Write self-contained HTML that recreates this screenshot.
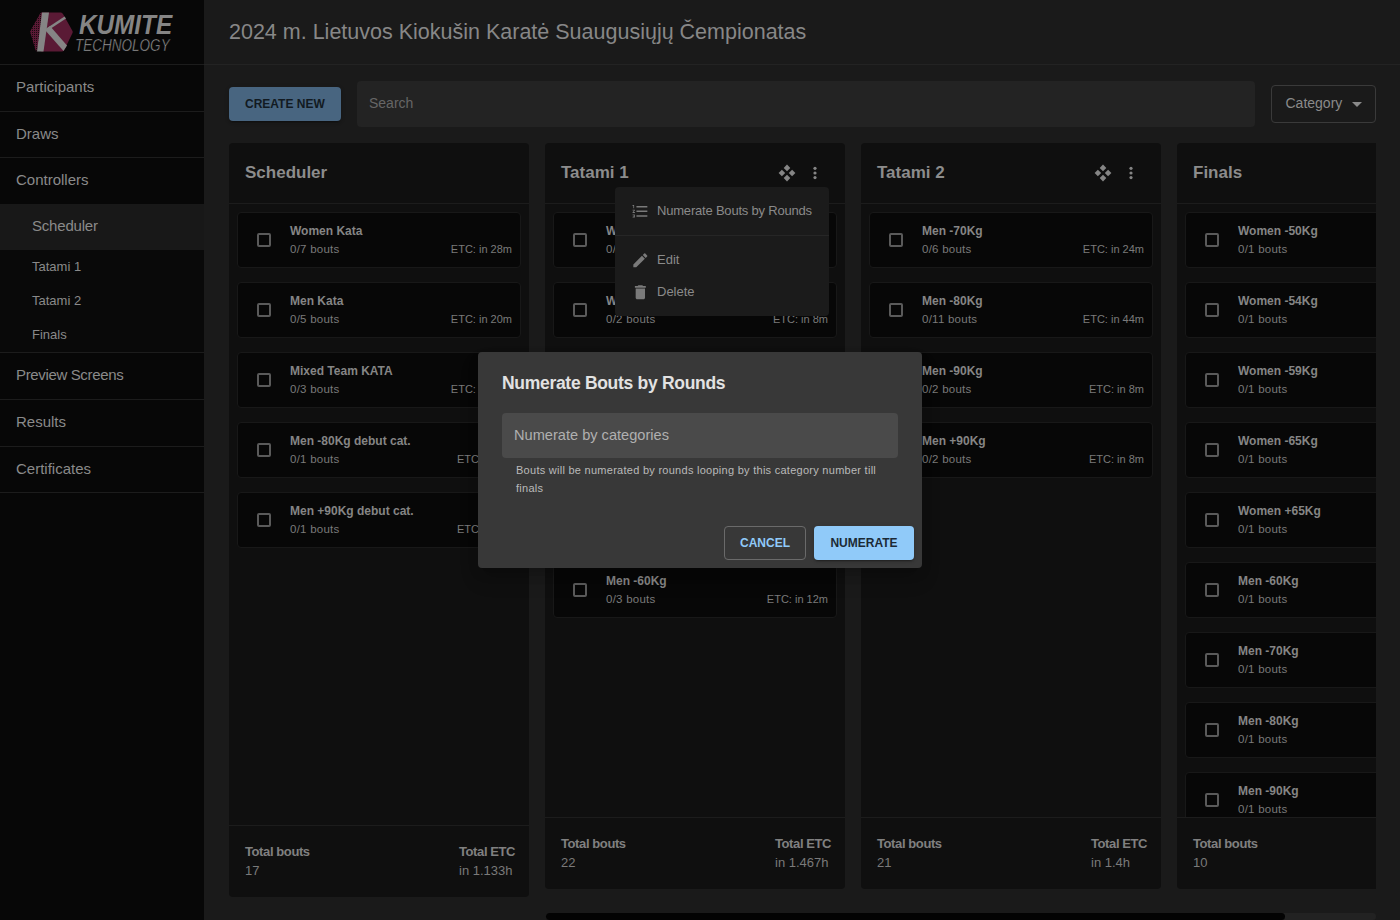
<!DOCTYPE html>
<html><head><meta charset="utf-8">
<style>
*{box-sizing:border-box;margin:0;padding:0}
html,body{width:1400px;height:920px;overflow:hidden;background:#1a1a1a;font-family:"Liberation Sans",sans-serif;color:#8a8a8a}
.abs{position:absolute}
#side{position:absolute;left:0;top:0;width:204px;height:920px;background:#070707}
.hl{position:absolute;left:0;height:1px;background:#1c1c1c}
.nav{position:absolute;left:16px;font-size:15px;white-space:nowrap;line-height:1}
.sub{position:absolute;left:32px;font-size:13px;white-space:nowrap;line-height:1}
#title{position:absolute;left:229px;top:22px;font-size:21.5px;color:#878787;white-space:nowrap;line-height:1}
.col{position:absolute;top:143px;width:300px;background:#0f0f0f;border-radius:4px;overflow:hidden}
.colh{position:absolute;left:0;top:0;right:0;height:61px;border-bottom:1px solid #1c1c1c}
.colt{position:absolute;left:16px;top:21px;font-size:17px;font-weight:bold;color:#8c8c8c;line-height:1;white-space:nowrap}
.card{position:absolute;left:8px;width:284px;height:56px;background:#070707;border:1px solid #181818;border-radius:4px}
.cb{position:absolute;left:19px;top:20px;width:14px;height:14px;border:2px solid #5a5a5a;border-radius:2px}
.cn{position:absolute;left:52px;top:12px;font-size:12px;font-weight:bold;color:#858585;line-height:1;white-space:nowrap}
.cs{position:absolute;left:52px;top:31px;font-size:11.5px;letter-spacing:0.25px;color:#7a7a7a;line-height:1;white-space:nowrap}
.ce{position:absolute;right:8px;top:31px;font-size:11px;color:#7a7a7a;line-height:1;white-space:nowrap}
.foot{position:absolute;left:0;right:0;bottom:0;border-top:1px solid #1c1c1c}
.fl{position:absolute;font-size:13px;letter-spacing:-0.4px;font-weight:bold;color:#808080;line-height:1;white-space:nowrap}
.fv{position:absolute;font-size:13px;color:#7a7a7a;line-height:1;white-space:nowrap}
</style></head><body>
<div id="side">
  <svg class="abs" style="left:0;top:0" width="204" height="64" viewBox="0 0 204 64">
    <defs><pattern id="dots" width="2" height="2" patternUnits="userSpaceOnUse"><rect width="2" height="2" fill="#5a1a35"/><rect width="1" height="1" fill="#1a0a10"/></pattern></defs>
    <path d="M42 12.5 L61 12.5 Q62 12.5 63 14 L72.5 31 Q73 32 72.5 33 L64 50.5 Q63 51.5 62 51.5 L42 51.5 Q41 51.5 40 50.5 L30.5 33 Q30 32 30.5 31 L40 14 Q41 12.5 42 12.5 Z" fill="#5a1a35"/>
    <path d="M40 14 Q41 12.5 42 12.5 L43 12.5 L37 51.5 Q36 51 35.5 50 L30.5 33 Q30 32 30.5 31 Z" fill="url(#dots)"/>
    <path d="M42 12.5 L49 12.5 L43.5 51.5 L37 51.5 Z" fill="#858585"/>
    <path d="M45.5 29 L64.5 16.5 L66 18.5 L47 31 Z" fill="#858585"/>
    <path d="M45 30 L50 26 L67 45.5 L63.5 51 Z" fill="#858585"/>
  </svg>
  <div class="abs" style="left:79px;top:11.5px;font-size:27px;font-weight:bold;font-style:italic;color:#858585;line-height:1;white-space:nowrap;transform:scaleX(0.9);transform-origin:0 0">KUMITE</div>
  <div class="abs" style="left:75px;top:38px;font-size:16px;font-style:italic;color:#a0a0a0;-webkit-text-stroke:0.5px #070707;line-height:1;white-space:nowrap;transform:scaleX(0.845);transform-origin:0 0">TECHNOLOGY</div>
  <div class="hl" style="top:64px;width:204px"></div>
  <div class="nav" style="top:78.5px">Participants</div>
  <div class="hl" style="top:111px;width:204px"></div>
  <div class="nav" style="top:125.5px">Draws</div>
  <div class="hl" style="top:157px;width:204px"></div>
  <div class="nav" style="top:171.5px">Controllers</div>
  <div class="abs" style="left:0;top:204px;width:204px;height:46px;background:#181818"></div>
  <div class="nav" style="left:32px;top:217.5px;letter-spacing:-0.2px">Scheduler</div>
  <div class="abs" style="left:0;top:250px;width:204px;height:102px;background:#090909"></div>
  <div class="sub" style="top:260px">Tatami 1</div>
  <div class="sub" style="top:294px">Tatami 2</div>
  <div class="sub" style="top:328px">Finals</div>
  <div class="hl" style="top:352px;width:204px"></div>
  <div class="nav" style="top:366.5px;letter-spacing:-0.35px">Preview Screens</div>
  <div class="hl" style="top:399px;width:204px"></div>
  <div class="nav" style="top:413.5px">Results</div>
  <div class="hl" style="top:446px;width:204px"></div>
  <div class="nav" style="top:460.5px">Certificates</div>
  <div class="hl" style="top:492px;width:204px"></div>
</div>
<div class="hl" style="left:204px;top:64px;width:1196px;background:#232323"></div>
<div id="title">2024 m. Lietuvos Kiokušin Karatė Suaugusiųjų Čempionatas</div>

<!-- toolbar -->
<div class="abs" style="left:229px;top:87px;width:112px;height:34px;background:#486580;border-radius:4px;box-shadow:0 3px 1px -2px rgba(0,0,0,.2),0 2px 2px 0 rgba(0,0,0,.14),0 1px 5px 0 rgba(0,0,0,.12)"></div>
<div class="abs" style="left:245px;top:98px;font-size:12px;font-weight:bold;color:#121a22;line-height:1;white-space:nowrap">CREATE NEW</div>
<div class="abs" style="left:357px;top:81px;width:898px;height:46px;background:#232323;border-radius:4px"></div>
<div class="abs" style="left:369px;top:96px;font-size:14px;color:#666;line-height:1">Search</div>
<div class="abs" style="left:1271px;top:85px;width:105px;height:38px;border:1px solid #3a3a3a;border-radius:4px"></div>
<div class="abs" style="left:1285.5px;top:96px;font-size:14px;color:#8a8a8a;line-height:1">Category</div>

<!-- Scheduler column -->
<div class="col" style="left:229px;height:754px">
  <div class="colh"><div class="colt">Scheduler</div></div>
  <div class="card" style="top:69px"><div class="cb"></div><div class="cn">Women Kata</div><div class="cs">0/7 bouts</div><div class="ce">ETC: in 28m</div></div>
  <div class="card" style="top:139px"><div class="cb"></div><div class="cn">Men Kata</div><div class="cs">0/5 bouts</div><div class="ce">ETC: in 20m</div></div>
  <div class="card" style="top:209px"><div class="cb"></div><div class="cn">Mixed Team KATA</div><div class="cs">0/3 bouts</div><div class="ce">ETC: in 12m</div></div>
  <div class="card" style="top:279px"><div class="cb"></div><div class="cn">Men -80Kg debut cat.</div><div class="cs">0/1 bouts</div><div class="ce">ETC: in 4m</div></div>
  <div class="card" style="top:349px"><div class="cb"></div><div class="cn">Men +90Kg debut cat.</div><div class="cs">0/1 bouts</div><div class="ce">ETC: in 4m</div></div>
  <div class="foot" style="height:72px"><div class="fl" style="left:16px;top:19px">Total bouts</div><div class="fv" style="left:16px;top:38px">17</div><div class="abs" style="left:230px;top:0;width:70px;height:72px"><div class="fl" style="left:0;top:19px">Total ETC</div><div class="fv" style="left:0;top:38px">in 1.133h</div></div></div>
</div>
<div class="col" style="left:545px;height:746px">
  <div class="colh"><div class="colt">Tatami 1</div></div>
  <div class="card" style="top:69px"><div class="cb"></div><div class="cn">Women -50Kg</div><div class="cs">0/3 bouts</div><div class="ce">ETC: in 12m</div></div>
  <div class="card" style="top:139px"><div class="cb"></div><div class="cn">Women -54Kg</div><div class="cs">0/2 bouts</div><div class="ce">ETC: in 8m</div></div>
  <div class="card" style="top:209px"><div class="cb"></div><div class="cn">Women -59Kg</div><div class="cs">0/2 bouts</div><div class="ce">ETC: in 8m</div></div>
  <div class="card" style="top:279px"><div class="cb"></div><div class="cn">Women -65Kg</div><div class="cs">0/2 bouts</div><div class="ce">ETC: in 8m</div></div>
  <div class="card" style="top:349px"><div class="cb"></div><div class="cn">Women +65Kg</div><div class="cs">0/2 bouts</div><div class="ce">ETC: in 8m</div></div>
  <div class="card" style="top:419px"><div class="cb"></div><div class="cn">Men -60Kg</div><div class="cs">0/3 bouts</div><div class="ce">ETC: in 12m</div></div>
  <div class="foot" style="height:72px"><div class="fl" style="left:16px;top:19px">Total bouts</div><div class="fv" style="left:16px;top:38px">22</div><div class="abs" style="left:230px;top:0;width:70px;height:72px"><div class="fl" style="left:0;top:19px">Total ETC</div><div class="fv" style="left:0;top:38px">in 1.467h</div></div></div>
</div>
<div class="col" style="left:861px;height:746px">
  <div class="colh"><div class="colt">Tatami 2</div></div>
  <div class="card" style="top:69px"><div class="cb"></div><div class="cn">Men -70Kg</div><div class="cs">0/6 bouts</div><div class="ce">ETC: in 24m</div></div>
  <div class="card" style="top:139px"><div class="cb"></div><div class="cn">Men -80Kg</div><div class="cs">0/11 bouts</div><div class="ce">ETC: in 44m</div></div>
  <div class="card" style="top:209px"><div class="cb"></div><div class="cn">Men -90Kg</div><div class="cs">0/2 bouts</div><div class="ce">ETC: in 8m</div></div>
  <div class="card" style="top:279px"><div class="cb"></div><div class="cn">Men +90Kg</div><div class="cs">0/2 bouts</div><div class="ce">ETC: in 8m</div></div>
  <div class="foot" style="height:72px"><div class="fl" style="left:16px;top:19px">Total bouts</div><div class="fv" style="left:16px;top:38px">21</div><div class="abs" style="left:230px;top:0;width:70px;height:72px"><div class="fl" style="left:0;top:19px">Total ETC</div><div class="fv" style="left:0;top:38px">in 1.4h</div></div></div>
</div>
<div class="col" style="left:1177px;height:746px;width:199px;border-radius:4px 0 0 4px">
  <div class="colh"><div class="colt">Finals</div></div>
  <div class="abs" style="left:0;top:0;width:199px;height:674px;overflow:hidden">
  <div class="card" style="top:69px"><div class="cb"></div><div class="cn">Women -50Kg</div><div class="cs">0/1 bouts</div></div>
  <div class="card" style="top:139px"><div class="cb"></div><div class="cn">Women -54Kg</div><div class="cs">0/1 bouts</div></div>
  <div class="card" style="top:209px"><div class="cb"></div><div class="cn">Women -59Kg</div><div class="cs">0/1 bouts</div></div>
  <div class="card" style="top:279px"><div class="cb"></div><div class="cn">Women -65Kg</div><div class="cs">0/1 bouts</div></div>
  <div class="card" style="top:349px"><div class="cb"></div><div class="cn">Women +65Kg</div><div class="cs">0/1 bouts</div></div>
  <div class="card" style="top:419px"><div class="cb"></div><div class="cn">Men -60Kg</div><div class="cs">0/1 bouts</div></div>
  <div class="card" style="top:489px"><div class="cb"></div><div class="cn">Men -70Kg</div><div class="cs">0/1 bouts</div></div>
  <div class="card" style="top:559px"><div class="cb"></div><div class="cn">Men -80Kg</div><div class="cs">0/1 bouts</div></div>
  <div class="card" style="top:629px"><div class="cb"></div><div class="cn">Men -90Kg</div><div class="cs">0/1 bouts</div></div>
  </div>
  <div class="foot" style="height:72px"><div class="fl" style="left:16px;top:19px">Total bouts</div><div class="fv" style="left:16px;top:38px">10</div></div>
</div>


<!-- header icons -->
<svg class="abs" style="left:778px;top:164px" width="18" height="18" viewBox="0 0 18 18"><g fill="#858585"><path d="M9 0.60 L12.30 3.9000000000000004 L9 7.20 L5.70 3.9000000000000004Z"/><path d="M9 10.80 L12.30 14.1 L9 17.40 L5.70 14.1Z"/><path d="M3.9000000000000004 5.70 L7.20 9 L3.9000000000000004 12.30 L0.60 9Z"/><path d="M14.1 5.70 L17.40 9 L14.1 12.30 L10.80 9Z"/></g></svg><svg class="abs" style="left:806px;top:164px" width="18" height="18" viewBox="0 0 18 18"><g fill="#858585"><circle cx="9" cy="4.3" r="1.6"/><circle cx="9" cy="9" r="1.6"/><circle cx="9" cy="13.6" r="1.6"/></g></svg>
<svg class="abs" style="left:1094px;top:164px" width="18" height="18" viewBox="0 0 18 18"><g fill="#858585"><path d="M9 0.60 L12.30 3.9000000000000004 L9 7.20 L5.70 3.9000000000000004Z"/><path d="M9 10.80 L12.30 14.1 L9 17.40 L5.70 14.1Z"/><path d="M3.9000000000000004 5.70 L7.20 9 L3.9000000000000004 12.30 L0.60 9Z"/><path d="M14.1 5.70 L17.40 9 L14.1 12.30 L10.80 9Z"/></g></svg><svg class="abs" style="left:1122px;top:164px" width="18" height="18" viewBox="0 0 18 18"><g fill="#858585"><circle cx="9" cy="4.3" r="1.6"/><circle cx="9" cy="9" r="1.6"/><circle cx="9" cy="13.6" r="1.6"/></g></svg>
<!-- category arrow -->
<svg class="abs" style="left:1345px;top:92px" width="24" height="24" viewBox="0 0 24 24"><path fill="#8a8a8a" d="M7 10l5 5 5-5z"/></svg>
<!-- scrollbar -->
<div class="abs" style="left:546px;top:913px;width:830px;height:7px;background:#222;border-radius:4px"></div>
<div class="abs" style="left:546px;top:913px;width:739px;height:7px;background:#030303;border-radius:4px"></div>

<!-- menu -->
<div class="abs" style="left:615px;top:187px;width:214px;height:129px;background:#1b1b1b;border-radius:4px">
  <svg class="abs" style="left:15.6px;top:14.6px" width="18.7" height="18.7" viewBox="0 0 24 24"><path fill="#7a7a7a" d="M2 17h2v.5H3v1h1v.5H2v1h3v-4H2v1zm1-9h1V4H2v1h1v3zm-1 3h1.8L2 13.1v.9h3v-1H3.2L5 10.9V10H2v1zm5-6v2h14V5H7zm0 14h14v-2H7v2zm0-6h14v-2H7v2z"/></svg>
  <div class="abs" style="left:42px;top:17px;font-size:13px;letter-spacing:-0.2px;color:#8a8a8a;line-height:1;white-space:nowrap">Numerate Bouts by Rounds</div>
  <div class="abs" style="left:0;top:48px;width:214px;height:1px;background:#262626"></div>
  <svg class="abs" style="left:15.6px;top:63.6px" width="18.7" height="18.7" viewBox="0 0 24 24"><path fill="#7a7a7a" d="M3 17.25V21h3.75L17.81 9.94l-3.75-3.75L3 17.25zM20.71 7.04c.39-.39.39-1.02 0-1.41l-2.34-2.34a.9959.9959 0 0 0-1.41 0l-1.83 1.83 3.75 3.75 1.83-1.83z"/></svg>
  <div class="abs" style="left:42px;top:66px;font-size:13px;color:#8a8a8a;line-height:1;white-space:nowrap">Edit</div>
  <svg class="abs" style="left:15.6px;top:95.6px" width="18.7" height="18.7" viewBox="0 0 24 24"><path fill="#7a7a7a" d="M6 19c0 1.1.9 2 2 2h8c1.1 0 2-.9 2-2V7H6v12zM19 4h-3.5l-1-1h-5l-1 1H5v2h14V4z"/></svg>
  <div class="abs" style="left:42px;top:98px;font-size:13px;color:#8a8a8a;line-height:1;white-space:nowrap">Delete</div>
</div>

<!-- dialog -->
<div class="abs" style="left:478px;top:352px;width:444px;height:216px;background:#383838;border-radius:4px;box-shadow:0 6px 12px -4px rgba(0,0,0,.25),0 12px 20px 0 rgba(0,0,0,.12)">
  <div class="abs" style="left:24px;top:22.5px;font-size:17.5px;letter-spacing:-0.3px;font-weight:bold;color:#e2e2e2;line-height:1;white-space:nowrap">Numerate Bouts by Rounds</div>
  <div class="abs" style="left:24px;top:61px;width:396px;height:45px;background:#4a4a4a;border-radius:4px"></div>
  <div class="abs" style="left:36px;top:75.5px;font-size:14.6px;color:#b0b0b0;line-height:1;white-space:nowrap">Numerate by categories</div>
  <div class="abs" style="left:38px;top:109px;width:380px;font-size:11px;color:#bababa;line-height:18px;letter-spacing:.27px">Bouts will be numerated by rounds looping by this category number till finals</div>
  <div class="abs" style="left:246px;top:174px;width:82px;height:34px;border:1px solid #6a6a6a;border-radius:4px"></div>
  <div class="abs" style="left:246px;top:185px;width:82px;text-align:center;font-size:12px;font-weight:bold;color:#90caf9;line-height:1">CANCEL</div>
  <div class="abs" style="left:336px;top:174px;width:100px;height:34px;background:#90caf9;border-radius:4px;box-shadow:0 3px 1px -2px rgba(0,0,0,.2),0 2px 2px 0 rgba(0,0,0,.14),0 1px 5px 0 rgba(0,0,0,.12)"></div>
  <div class="abs" style="left:336px;top:185px;width:100px;text-align:center;font-size:12px;font-weight:bold;color:#1c2a36;line-height:1">NUMERATE</div>
</div>
</body></html>
